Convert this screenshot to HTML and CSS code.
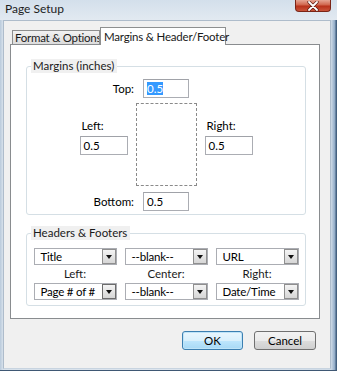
FILE: index.html
```html
<!DOCTYPE html>
<html lang="en">
<head>
    <meta charset="UTF-8">
    <title>Page Setup</title>
    <link rel="stylesheet" href="styles.css">
</head>
<body>
    <div class="window">
        <div class="titlebar">
            <span class="title">Page Setup</span>
            <div class="close">
                <svg width="14" height="10" viewBox="0 0 14 10">
                    <path d="M3 1 L11 9 M11 1 L3 9" stroke="#5a1a10" stroke-width="3.2" stroke-linecap="round"/>
                    <path d="M3 1 L11 9 M11 1 L3 9" stroke="#fff" stroke-width="1.8" stroke-linecap="round"/>
                </svg>
            </div>
        </div>

        <div class="client">
            <div class="tabs">
                <div class="tab">Format &amp; Options</div>
                <div class="tab active">Margins &amp; Header/Footer</div>
            </div>

            <div class="panel">
                <fieldset class="group margins">
                    <legend>Margins (inches)</legend>
                    <div class="center-row">
                        <label>Top:</label>
                        <div class="field"><span class="selected">0.5</span></div>
                    </div>
                    <div class="page-grid">
                        <div class="side">
                            <label>Left:</label>
                            <div class="field">0.5</div>
                        </div>
                        <div class="page-box"></div>
                        <div class="side">
                            <label>Right:</label>
                            <div class="field">0.5</div>
                        </div>
                    </div>
                    <div class="center-row bottom-row">
                        <label>Bottom:</label>
                        <div class="field">0.5</div>
                    </div>
                </fieldset>

                <fieldset class="group headers">
                    <legend>Headers &amp; Footers</legend>
                    <div class="hf-grid">
                        <div class="combo"><span>Title</span><span class="drop"></span></div>
                        <div class="combo"><span>--blank--</span><span class="drop"></span></div>
                        <div class="combo"><span>URL</span><span class="drop"></span></div>
                        <div class="hf-label">Left:</div>
                        <div class="hf-label">Center:</div>
                        <div class="hf-label">Right:</div>
                        <div class="combo"><span>Page # of #</span><span class="drop focus"></span></div>
                        <div class="combo"><span>--blank--</span><span class="drop"></span></div>
                        <div class="combo"><span>Date/Time</span><span class="drop"></span></div>
                    </div>
                </fieldset>
            </div>

            <div class="buttons">
                <button class="btn btn-default">OK</button>
                <button class="btn">Cancel</button>
            </div>
        </div>
    </div>
</body>
</html>
```

FILE: styles.css
```css
body {
    margin: 0;
    font-family: Lato, "Noto Sans", sans-serif;
    font-size: 11.5px;
    color: #000;
    background: #fff;
}
.window {
    position: relative;
    width: 337px;
    height: 371px;
    box-sizing: border-box;
    background: linear-gradient(90deg, #b9cadb 0, #d7e1eb 3px, #dde5ee 50%, #cfdbe7 331px, #8ea9c6 335px, #44607f 336px);
    border-bottom: 1px solid #3f5874;
}
.titlebar {
    height: 20px;
    padding-left: 5px;
    background: linear-gradient(#d3dfeb, #e2e9f1);
    box-sizing: border-box;
}
.title {
    display: inline-block;
    font-size: 12px;
    line-height: 18px;
    color: #1d1d1d;
}
.close {
    position: absolute;
    top: 0;
    left: 295px;
    width: 36px;
    height: 12px;
    box-sizing: border-box;
    border: 1px solid #7a2416;
    border-top: none;
    border-radius: 0 0 4px 4px;
    background: linear-gradient(#e6a593 0, #d0654c 45%, #b8311a 55%, #c9543a 100%);
    display: flex;
    justify-content: center;
    align-items: center;
}
.client {
    margin-left: 3px;
    width: 328px;
    height: 349px;
    box-sizing: border-box;
    border: 1px solid #aebccb;
    border-bottom-color: #c8d4e0;
    background: #f0f0f0;
}
.tabs {
    display: flex;
    align-items: flex-end;
    height: 23px;
    padding-left: 8px;
}
.tab {
    width: 88px;
    height: 14px;
    line-height: 13px;
    box-sizing: border-box;
    padding: 0 2px;
    white-space: nowrap;
    overflow: hidden;
    letter-spacing: -0.25px;
    border: 1px solid #8e8f8f;
    border-bottom: none;
    background: linear-gradient(#f2f2f2, #dcdcdc);
    color: #1a1a1a;
}
.tab.active {
    width: 126px;
    height: 18px;
    line-height: 17px;
    margin-bottom: -1px;
    position: relative;
    overflow: visible;
    background: #fff;
    letter-spacing: -0.2px;
    padding: 0 2px 0 3px;
}
.panel {
    margin-left: 6px;
    width: 310px;
    height: 275px;
    box-sizing: border-box;
    border: 1px solid #898c8f;
    background: #fff;
}
.group {
    margin: 14px 0 0 15px;
    width: 280px;
    box-sizing: border-box;
    border: 1px solid #d5dfe5;
    border-radius: 3px;
    padding: 6px 0 3px;
    min-width: 0;
}
.group legend {
    margin-left: 4px;
    padding: 0 3px 0 2px;
    line-height: 14px;
    background: #f0f0f0;
    color: #1a1a1a;
}
.headers {
    margin-top: 11px;
    padding: 8px 0 5px;
}
.field {
    height: 19px;
    line-height: 17px;
    box-sizing: border-box;
    border: 1px solid #abadb3;
    border-top-color: #a0a2a8;
    padding-left: 3px;
    background: #fff;
}
.selected {
    background: #3399ff;
    color: #fff;
}
.center-row {
    display: grid;
    grid-template-columns: 1fr 46px 1fr;
    column-gap: 9px;
    align-items: center;
}
.center-row label {
    text-align: right;
}
.bottom-row {
    margin-top: 6px;
}
.page-grid {
    display: grid;
    grid-template-columns: 48px 61px 48px;
    column-gap: 8px;
    justify-content: center;
    margin-top: 5px;
}
.side {
    padding-top: 16px;
}
.side label {
    display: block;
    line-height: 14px;
    padding-left: 2px;
    margin-bottom: 3px;
}
.page-box {
    height: 83px;
    box-sizing: border-box;
    border: 1px dashed #8a8a8a;
}
.hf-grid {
    display: grid;
    grid-template-columns: repeat(3, 83px);
    grid-template-rows: 17px 18px 17px;
    column-gap: 8px;
    justify-content: center;
}
.hf-label {
    text-align: center;
    line-height: 18px;
    color: #1a1a1a;
}
.combo {
    display: flex;
    align-items: stretch;
    box-sizing: border-box;
    border: 1px solid #abadb3;
    background: #fff;
}
.combo span:first-child {
    flex: 1;
    padding-left: 6px;
    line-height: 15px;
    letter-spacing: -0.2px;
    white-space: nowrap;
    overflow: hidden;
}
.drop {
    position: relative;
    width: 14px;
    flex: none;
    box-sizing: border-box;
    border: 1px solid #8f8f8f;
    background: linear-gradient(#f4f4f4, #d6d6d6);
}
.drop.focus {
    border-color: #6c6c6c;
}
.drop::after {
    content: "";
    position: absolute;
    left: 3px;
    top: 5px;
    border-left: 3.5px solid transparent;
    border-right: 3.5px solid transparent;
    border-top: 4px solid #111;
}
.buttons {
    display: flex;
    justify-content: flex-end;
    gap: 11px;
    margin-top: 12px;
    padding-right: 14px;
}
.btn {
    width: 62px;
    height: 19px;
    padding: 0;
    font-family: Lato, "Noto Sans", sans-serif;
    font-size: 11.5px;
    color: #000;
    border: 1px solid #707070;
    border-radius: 3px;
    background: linear-gradient(#f2f2f2 0, #ebebeb 50%, #dddddd 51%, #cfcfcf 100%);
}
.btn-default {
    width: 61px;
    border-color: #3c7fb1;
    box-shadow: inset 0 0 0 1px #bfe4f8;
    background: linear-gradient(#eaf6fd 0, #d9f0fc 50%, #bee6fd 51%, #a7d9f5 100%);
}
```
